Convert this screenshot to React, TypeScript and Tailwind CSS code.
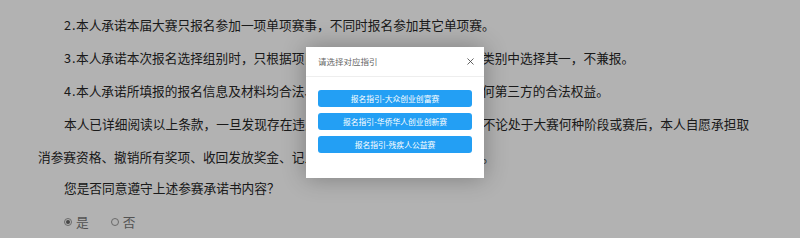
import { X } from "lucide-react";

const font = { fontFamily: '"Noto Sans CJK SC", "Noto Sans", sans-serif' };

const guides = [
  "报名指引-大众创业创富赛",
  "报名指引-华侨华人创业创新赛",
  "报名指引-残疾人公益赛",
];

function Num({ n }: { n: string }) {
  return <span className="inline-block w-[12px] tracking-[1px]">{n}</span>;
}

export default function App() {
  return (
    <div className="relative w-[800px] h-[238px] overflow-hidden bg-white" style={font}>
      <div className="pl-[38px] pt-[8px] text-[12.7px] text-[#262626] whitespace-nowrap">
        <div className="h-[33px] leading-[33px] pl-[26px]">
          <Num n="2." />本人承诺本届大赛只报名参加一项单项赛事，不同时报名参加其它单项赛。
        </div>
        <div className="h-[33px] leading-[33px] pl-[26px]">
          <Num n="3." />本人承诺本次报名选择组别时，只根据项目特点在大众、华侨、残疾人三类别中选择其一，不兼报。
        </div>
        <div className="h-[33px] leading-[33px] pl-[26px]">
          <Num n="4." />本人承诺所填报的报名信息及材料均合法、真实、有效，不侵犯他人或任何第三方的合法权益。
        </div>
        <div className="h-[33px] leading-[33px] pl-[26px]">
          本人已详细阅读以上条款，一旦发现存在违反上述承诺书内容及相关规定，不论处于大赛何种阶段或赛后，本人自愿承担取
        </div>
        <div className="h-[33px] leading-[33px]">
          消参赛资格、撤销所有奖项、收回发放奖金、记入诚信档案并承担相应法律责任。
        </div>
        <div className="h-[30px] leading-[30px] pl-[26px]">您是否同意遵守上述参赛承诺书内容？</div>
        <div className="h-[38px] flex items-center pl-[26px] gap-[22px] text-[#777]">
          <label className="flex items-center gap-[4px]">
            <span className="w-[8px] h-[8px] rounded-full border border-[#999] flex items-center justify-center">
              <span className="w-[4px] h-[4px] rounded-full bg-[#666]" />
            </span>
            是
          </label>
          <label className="flex items-center gap-[4px]">
            <span className="w-[8px] h-[8px] rounded-full border border-[#999]" />
            否
          </label>
        </div>
      </div>

      <div className="absolute inset-0 bg-black/30" />

      <div className="absolute left-[306px] top-[47px] w-[178px] bg-white shadow-[0_0_22px_rgba(0,0,0,0.3)]">
        <div className="h-[30px] flex items-center justify-between pl-[12px] pr-[8px] border-b border-[#eeeeee]">
          <span className="text-[8.5px] text-[#666]">请选择对应指引</span>
          <X size={11} strokeWidth={1.8} className="text-[#444]" />
        </div>
        <div className="flex flex-col gap-[6px] px-[12px] pt-[13px] pb-[25px]">
          {guides.map((g) => (
            <button
              key={g}
              className="h-[17px] rounded-[3px] bg-[#239ff4] text-white text-[7.8px] leading-[17px] text-center"
            >
              {g}
            </button>
          ))}
        </div>
      </div>
    </div>
  );
}
